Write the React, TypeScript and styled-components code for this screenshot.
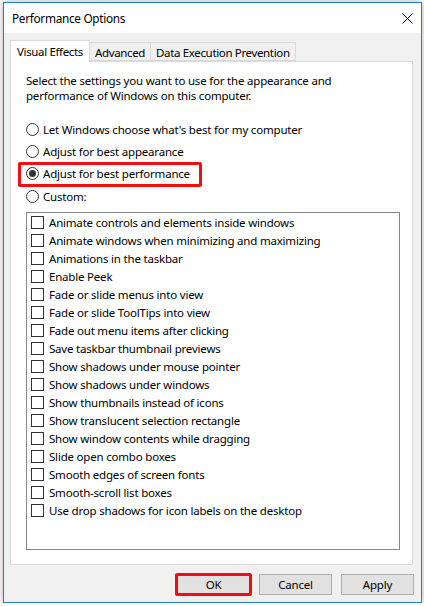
import React from "react";
import styled, { createGlobalStyle } from "styled-components";

const FONT = `"Noto Sans", "Open Sans", Arial, sans-serif`;

const Global = createGlobalStyle`
  html, body { margin: 0; padding: 0; background: #ffffff; }
  body { font-family: ${FONT}; font-size: 11.5px; letter-spacing: -0.2px; color: #000; }
  * { box-sizing: border-box; }
`;

const Window = styled.div`
  margin: 2px 0 0 3px;
  width: 419px;
  height: 601px;
  border: 1px solid #2b7ad0;
  box-shadow: 0 0 6px rgba(0, 0, 0, 0.35);
  background: #f0f0f0;
  display: flex;
  flex-direction: column;
`;

const TitleBar = styled.div`
  height: 30px;
  background: #ffffff;
  display: flex;
  align-items: center;
  justify-content: space-between;
  padding: 0 8px 0 8px;
`;

const Title = styled.span`
  font-size: 11.8px;
  line-height: 16px;
  letter-spacing: -0.3px;
`;

const CloseButton = styled.div`
  width: 12px;
  height: 12px;
  display: flex;
  align-items: center;
  justify-content: center;
`;

const Body = styled.div`
  flex: 1;
  display: flex;
  flex-direction: column;
  padding: 7px 8px 0 6px;
`;

const TabStrip = styled.div`
  display: flex;
  align-items: flex-end;
  height: 21px;
  position: relative;
  z-index: 1;
`;

const Tab = styled.div<{ $active?: boolean }>`
  height: ${(p) => (p.$active ? "22px" : "19px")};
  padding: 0 ${(p) => (p.$active ? "6px" : "5px")};
  background: ${(p) => (p.$active ? "#ffffff" : "#f0f0f0")};
  border: 1px solid #d9d9d9;
  border-bottom: ${(p) => (p.$active ? "none" : "1px solid #d9d9d9")};
  margin-bottom: ${(p) => (p.$active ? "-1px" : "0")};
  border-left: ${(p) => (p.$active ? "1px solid #d9d9d9" : "none")};
  display: flex;
  align-items: center;
  white-space: nowrap;
  letter-spacing: -0.35px;
  padding-top: ${(p) => (p.$active ? "0" : "1px")};
`;

const Panel = styled.div`
  width: 403px;
  height: 504px;
  background: #ffffff;
  border: 1px solid #d9d9d9;
  padding: 12px 12px 0 15px;
  display: flex;
  flex-direction: column;
`;

const Description = styled.p`
  margin: 0;
  line-height: 14.5px;
`;

const RadioGroup = styled.div`
  margin-top: 15px;
  display: flex;
  flex-direction: column;
`;

const RadioRow = styled.label`
  position: relative;
  height: 22.4px;
  display: flex;
  align-items: center;
  gap: 4px;
  white-space: nowrap;
`;

const RadioCircle = styled.span<{ $checked?: boolean }>`
  width: 13px;
  height: 13px;
  border-radius: 50%;
  border: 1px solid #333333;
  background: #ffffff;
  display: flex;
  align-items: center;
  justify-content: center;
  flex-shrink: 0;
  &::after {
    content: "";
    width: 7px;
    height: 7px;
    border-radius: 50%;
    background: ${(p) => (p.$checked ? "#333333" : "transparent")};
  }
`;

const Highlight = styled.span`
  position: absolute;
  left: -8px;
  top: -1px;
  width: 184px;
  height: 25px;
  border: 3px solid #f20d15;
  border-radius: 2px;
  pointer-events: none;
`;

const CheckList = styled.div`
  margin-top: 4px;
  width: 374px;
  height: 338px;
  border: 1px solid #828790;
  padding: 1px 4px 0 4px;
  display: flex;
  flex-direction: column;
`;

const CheckRow = styled.div`
  height: 18px;
  display: flex;
  align-items: center;
  gap: 5px;
  white-space: nowrap;
`;

const CheckBox = styled.span`
  width: 13px;
  height: 13px;
  border: 1px solid #333333;
  background: #ffffff;
  flex-shrink: 0;
`;

const ButtonRow = styled.div`
  margin-top: 9px;
  display: flex;
  justify-content: flex-end;
  gap: 9px;
  margin-right: -1px;
`;

const ButtonFrame = styled.div`
  position: relative;
`;

const Button = styled.button`
  width: 73px;
  height: 21px;
  background: #e1e1e1;
  border: 1px solid #adadad;
  font-family: ${FONT};
  font-size: 11.5px;
  letter-spacing: -0.2px;
  color: #000;
  padding: 0;
  display: flex;
  align-items: center;
  justify-content: center;
`;

const ButtonMark = styled.span`
  position: absolute;
  left: -2px;
  top: -1px;
  right: -2px;
  bottom: -1px;
  border: 3px solid #f20d15;
  border-radius: 2px;
  pointer-events: none;
`;

const radios = [
  { label: "Let Windows choose what's best for my computer" },
  { label: "Adjust for best appearance" },
  { label: "Adjust for best performance", checked: true, marked: true },
  { label: "Custom:" },
];

const effects = [
  "Animate controls and elements inside windows",
  "Animate windows when minimizing and maximizing",
  "Animations in the taskbar",
  "Enable Peek",
  "Fade or slide menus into view",
  "Fade or slide ToolTips into view",
  "Fade out menu items after clicking",
  "Save taskbar thumbnail previews",
  "Show shadows under mouse pointer",
  "Show shadows under windows",
  "Show thumbnails instead of icons",
  "Show translucent selection rectangle",
  "Show window contents while dragging",
  "Slide open combo boxes",
  "Smooth edges of screen fonts",
  "Smooth-scroll list boxes",
  "Use drop shadows for icon labels on the desktop",
];

export default function App() {
  return (
    <>
      <Global />
      <Window>
        <TitleBar>
          <Title>Performance Options</Title>
          <CloseButton>
            <svg width="11" height="11" viewBox="0 0 11 11">
              <path d="M0.5 0.5 L10.5 10.5 M10.5 0.5 L0.5 10.5" stroke="#000" strokeWidth="1" fill="none" />
            </svg>
          </CloseButton>
        </TitleBar>
        <Body>
          <TabStrip>
            <Tab $active>Visual Effects</Tab>
            <Tab>Advanced</Tab>
            <Tab>Data Execution Prevention</Tab>
          </TabStrip>
          <Panel>
            <Description>
              Select the settings you want to use for the appearance and
              <br />
              performance of Windows on this computer.
            </Description>
            <RadioGroup>
              {radios.map((r) => (
                <RadioRow key={r.label}>
                  <RadioCircle $checked={r.checked} />
                  <span>{r.label}</span>
                  {r.marked && <Highlight />}
                </RadioRow>
              ))}
            </RadioGroup>
            <CheckList>
              {effects.map((e) => (
                <CheckRow key={e}>
                  <CheckBox />
                  <span>{e}</span>
                </CheckRow>
              ))}
            </CheckList>
          </Panel>
          <ButtonRow>
            <ButtonFrame>
              <Button>OK</Button>
              <ButtonMark />
            </ButtonFrame>
            <ButtonFrame>
              <Button>Cancel</Button>
            </ButtonFrame>
            <ButtonFrame>
              <Button>Apply</Button>
            </ButtonFrame>
          </ButtonRow>
        </Body>
      </Window>
    </>
  );
}
